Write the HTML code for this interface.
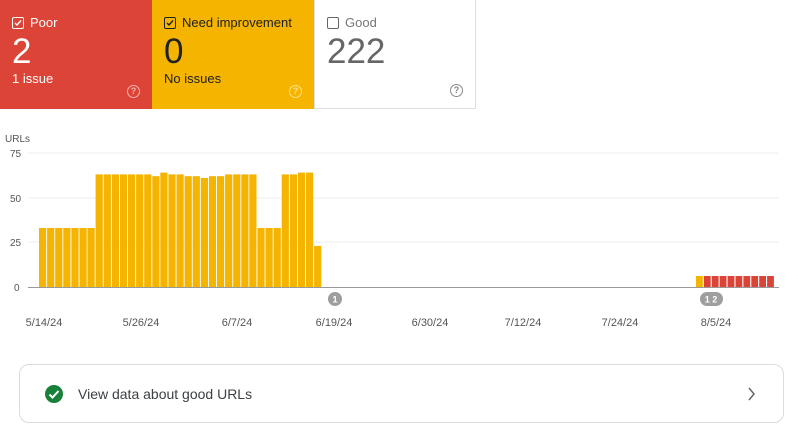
<!DOCTYPE html>
<html><head><meta charset="utf-8"><style>
body{margin:0;width:806px;height:446px;background:#fff;font-family:"Liberation Sans",sans-serif;position:relative;overflow:hidden}
.c{position:absolute;top:0;height:109px;box-sizing:border-box;padding:15px 12px}
.lab{font-size:13px;display:flex;align-items:center;gap:6px}
.box{width:10px;height:10px;border:1.3px solid currentColor;border-radius:2px;display:inline-block;position:relative}
.num{font-size:35px;margin-top:4px;line-height:36px}
.sub{font-size:13px;margin-top:1px}
.q{position:absolute;right:12px;bottom:11px;width:11px;height:11px;border:1.3px solid currentColor;border-radius:50%;font-size:9px;line-height:11px;text-align:center;font-weight:bold}
</style></head><body>
<div class="c" style="left:0;width:152px;background:#dd4438;color:#fff">
<div class="lab"><span class="box"><svg width="10" height="10" style="position:absolute;left:0;top:0"><path d="M2 5l2 2 4-4.5" stroke="#fff" stroke-width="1.4" fill="none"/></svg></span>Poor</div>
<div class="num">2</div><div class="sub">1 issue</div><div class="q" style="color:#f3b3ad">?</div></div>
<div class="c" style="left:152px;width:162px;background:#f4b400;color:#202124">
<div class="lab"><span class="box"><svg width="10" height="10" style="position:absolute;left:0;top:0"><path d="M2 5l2 2 4-4.5" stroke="#202124" stroke-width="1.4" fill="none"/></svg></span>Need improvement</div>
<div class="num">0</div><div class="sub">No issues</div><div class="q" style="color:#fbe08a">?</div></div>
<div class="c" style="left:314px;width:162px;background:#fff;color:#777;border:1px solid #ddd;border-top:none">
<div class="lab"><span class="box" style="color:#666"></span>Good</div>
<div class="num" style="color:#666">222</div><div class="q" style="color:#888">?</div></div>

<svg width="806" height="360" style="position:absolute;left:0;top:0" font-family="Liberation Sans" font-size="10" fill="#555">
<text x="5" y="142">URLs</text>
<text x="10" y="157">75</text><text x="10" y="202">50</text><text x="10" y="246">25</text><text x="14" y="291">0</text>
<g stroke="#eee"><line x1="28" y1="153" x2="779" y2="153"/><line x1="28" y1="198" x2="779" y2="198"/><line x1="28" y1="242" x2="779" y2="242"/></g>
<g id="b" fill="#f4b400"></g>
<line x1="28" y1="287.5" x2="779" y2="287.5" stroke="#999"/>
<circle cx="335" cy="299" r="7" fill="#9e9e9e"/><text x="335" y="302.5" fill="#fff" font-size="9" text-anchor="middle" font-weight="bold">1</text>
<rect x="700" y="292" width="23" height="14" rx="7" fill="#9e9e9e"/><text x="711" y="302.5" fill="#fff" font-size="9" text-anchor="middle" font-weight="bold">1 2</text>
<g font-size="11" fill="#555" text-anchor="middle"><text x="44" y="326">5/14/24</text><text x="141" y="326">5/26/24</text><text x="237" y="326">6/7/24</text><text x="334" y="326">6/19/24</text><text x="430" y="326">6/30/24</text><text x="523" y="326">7/12/24</text><text x="620" y="326">7/24/24</text><text x="716" y="326">8/5/24</text></g>
</svg>
<div style="position:absolute;left:19px;top:364px;width:765px;height:59px;box-sizing:border-box;border:1px solid #dadce0;border-radius:10px">
<svg width="20" height="20" style="position:absolute;left:24px;top:19px"><circle cx="10" cy="10" r="9" fill="#188038"/><path d="M5.5 10.5l3 3 6-6.5" stroke="#fff" stroke-width="2" fill="none"/></svg>
<div style="position:absolute;left:58px;top:21px;font-size:14px;color:#3c4043">View data about good URLs</div>
<svg width="10" height="14" style="position:absolute;left:727px;top:22px"><path d="M2 1l5 6-5 6" stroke="#666" stroke-width="1.5" fill="none"/></svg>
</div>
<script>
var v=[33,33,33,33,33,33,33,63,63,63,63,63,63,63,62,64,63,63,62,62,61,62,62,63,63,63,63,33,33,33,63,63,64,64,23];
var g=document.getElementById('b'),s='';
v.forEach(function(h,i){var x=39+i*8.09;var hh=h*1.787;s+='<rect x="'+x.toFixed(1)+'" y="'+(287-hh).toFixed(1)+'" width="7.2" height="'+hh.toFixed(1)+'"/>';});
for(var i=0;i<10;i++){var x=696+i*7.9;s+='<rect x="'+x.toFixed(1)+'" y="276" width="6.8" height="11" fill="'+(i==0?'#f4b400':'#dd4438')+'"/>';}
g.innerHTML=s;
</script>
</body></html>
